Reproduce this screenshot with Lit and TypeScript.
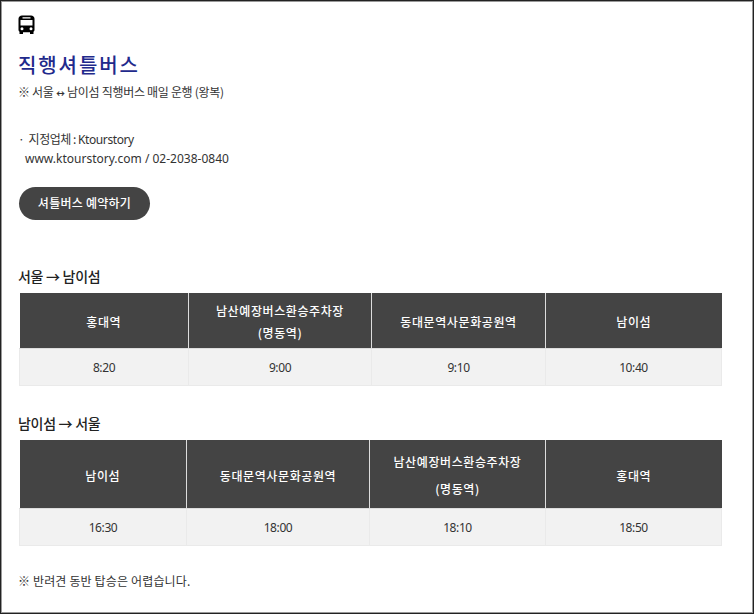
import { LitElement, html, css } from "lit";
import { customElement } from "lit/decorators.js";

interface Sched {
  title: string;
  cols: number[];
  heads: string[][];
  times: string[];
  tall: boolean;
}

const tables: Sched[] = [
  {
    title: "서울 → 남이섬",
    cols: [169, 183, 174, 176],
    heads: [["홍대역"], ["남산예장버스환승주차장", "(명동역)"], ["동대문역사문화공원역"], ["남이섬"]],
    times: ["8:20", "9:00", "9:10", "10:40"],
    tall: false,
  },
  {
    title: "남이섬 → 서울",
    cols: [167, 183, 176, 176],
    heads: [["남이섬"], ["동대문역사문화공원역"], ["남산예장버스환승주차장", "(명동역)"], ["홍대역"]],
    times: ["16:30", "18:00", "18:10", "18:50"],
    tall: true,
  },
];

@customElement("app-root")
export class AppRoot extends LitElement {
  static styles = css`
    :host {
      display: block;
      width: 754px;
      height: 614px;
      box-sizing: border-box;
      border: 1px solid #222;
      box-shadow: inset 0 0 0 1px #999;
      background: #fff;
      overflow: hidden;
      font-family: "Noto Sans CJK KR", "Noto Sans", sans-serif;
      color: #333;
      font-size: 12px;
      letter-spacing: -0.2px;
    }
    .wrap {
      padding: 14px 0 0 17px;
      display: flex;
      flex-direction: column;
      align-items: flex-start;
    }
    .icon {
      width: 17px;
      height: 20px;
      display: block;
    }
    h1 {
      margin: 11px 0 0;
      font-size: 20px;
      line-height: 37px;
      font-weight: 500;
      color: #1f2a8c;
      letter-spacing: 1.9px;
    }
    .sub {
      margin: 0;
      line-height: 18px;
      font-size: 12px;
      letter-spacing: -0.3px;
    }
    .arrow {
      font-size: 9px;
      font-weight: 700;
    }
    .info {
      margin: 26px 0 0;
      line-height: 19px;
      font-size: 12px;
      letter-spacing: -0.5px;
    }
    .info .line2 {
      display: block;
      padding-left: 7px;
      font-family: "Noto Sans", "Noto Sans CJK KR", sans-serif;
      letter-spacing: 0;
    }
    .latin {
      font-family: "Noto Sans", "Noto Sans CJK KR", sans-serif;
      letter-spacing: -0.4px;
    }
    .btn {
      margin: 19px 0 0 1px;
      width: 131px;
      height: 33px;
      padding-bottom: 2px;
      box-sizing: border-box;
      border-radius: 17px;
      background: #444;
      color: #fff;
      font-size: 12px;
      font-weight: 500;
      letter-spacing: 0.25px;
      display: flex;
      align-items: center;
      justify-content: center;
    }
    h2 {
      margin: 0;
      font-size: 14px;
      font-weight: 500;
      line-height: 20px;
      color: #222;
      letter-spacing: -0.3px;
    }
    .first {
      margin-top: 46px;
    }
    .second {
      margin-top: 27px;
    }
    table {
      margin: 7px 0 0 1px;
      border-collapse: collapse;
      table-layout: fixed;
      width: 702px;
    }
    th {
      background: #444;
      color: #fff;
      font-size: 12px;
      font-weight: 500;
      letter-spacing: 0.6px;
      text-align: center;
      padding: 2px 0 0;
      height: 53px;
      border-left: 1px solid #ddd;
      line-height: 22px;
    }
    th:first-child {
      border-left: 0;
    }
    .tall th {
      height: 66px;
      line-height: 27px;
    }
    th span {
      display: block;
    }
    td {
      background: #f2f2f2;
      height: 36px;
      padding: 0;
      text-align: center;
      font-size: 12px;
      border: 1px solid #eaeaea;
      border-top: 1px solid #ddd;
      font-family: "Noto Sans", sans-serif;
      letter-spacing: -0.4px;
    }
    .note {
      margin: 26px 0 0;
      font-size: 12px;
      line-height: 18px;
      letter-spacing: 0.15px;
    }
  `;

  render() {
    return html`
      <div class="wrap">
        <svg class="icon" viewBox="0 0 17 20" aria-hidden="true">
          <path
            fill="#000"
            fill-rule="evenodd"
            d="M4 0.5h9c2 0 3.5 1.3 3.5 3.2v11.3c0 .9-.4 1.5-1 1.8v2.2h-3.5v-1.8h-7v1.8H1.500v-2.2c-.6-.3-1-.9-1-1.800V3.700C.5 1.800 2 .5 4 .5zM4.500 2.200v1.200h8V2.200zM2.500 5v5.500h12V5zM4 12.300a1.500 1.500 0 1 0 0 3 1.500 1.500 0 0 0 0-3zM13 12.300a1.500 1.500 0 1 0 0 3 1.500 1.500 0 0 0 0-3z"
          />
        </svg>
        <h1>직행셔틀버스</h1>
        <p class="sub">※ 서울 <span class="arrow">↔</span> 남이섬 직행버스 매일 운행 (왕복)</p>
        <p class="info">
          ·&nbsp; 지정업체 : <span class="latin">Ktourstory</span>
          <span class="line2">www.ktourstory.com / 02-2038-0840</span>
        </p>
        <div class="btn">셔틀버스 예약하기</div>
        ${tables.map(
          (t, i) => html`
            <h2 class=${i === 0 ? "first" : "second"}>${t.title}</h2>
            <table class=${t.tall ? "tall" : ""}>
              <colgroup>
                ${t.cols.map((w) => html`<col style="width:${w}px" />`)}
              </colgroup>
              <tr>
                ${t.heads.map(
                  (h) => html`<th>${h.map((l) => html`<span>${l}</span>`)}</th>`
                )}
              </tr>
              <tr>
                ${t.times.map((v) => html`<td>${v}</td>`)}
              </tr>
            </table>
          `
        )}
        <p class="note">※ 반려견 동반 탑승은 어렵습니다.</p>
      </div>
    `;
  }
}
